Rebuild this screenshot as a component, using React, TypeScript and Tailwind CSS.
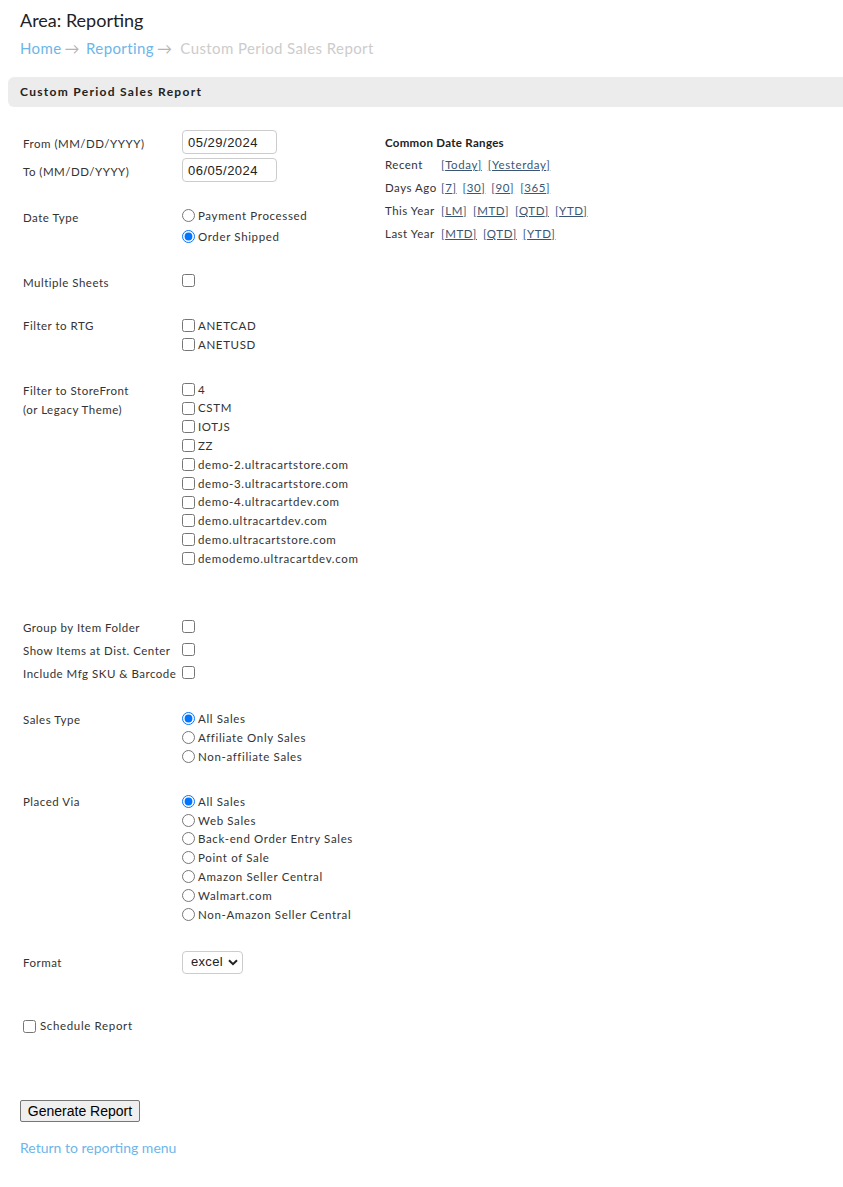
import { useState } from "react";

const STOREFRONTS = [
  "4",
  "CSTM",
  "IOTJS",
  "ZZ",
  "demo-2.ultracartstore.com",
  "demo-3.ultracartstore.com",
  "demo-4.ultracartdev.com",
  "demo.ultracartdev.com",
  "demo.ultracartstore.com",
  "demodemo.ultracartdev.com",
];

const PLACED_VIA = [
  "All Sales",
  "Web Sales",
  "Back-end Order Entry Sales",
  "Point of Sale",
  "Amazon Seller Central",
  "Walmart.com",
  "Non-Amazon Seller Central",
];

const DATE_RANGES: { label: string; links: string[] }[] = [
  { label: "Recent", links: ["Today", "Yesterday"] },
  { label: "Days Ago", links: ["7", "30", "90", "365"] },
  { label: "This Year", links: ["LM", "MTD", "QTD", "YTD"] },
  { label: "Last Year", links: ["MTD", "QTD", "YTD"] },
];

const Check = ({ label }: { label?: string }) => (
  <label className="flex h-[18.8px] items-center">
    <input type="checkbox" className="m-0 mr-[3px] h-[13px] w-[13px]" />
    {label && <span className="tracking-[0.65px]">{label}</span>}
  </label>
);

const Radio = ({
  name,
  label,
  checked,
  onChange,
  tall = false,
}: {
  name: string;
  label: string;
  checked: boolean;
  onChange: () => void;
  tall?: boolean;
}) => (
  <label className={`flex items-center ${tall ? "h-[21px]" : "h-[18.8px]"}`}>
    <input
      type="radio"
      name={name}
      checked={checked}
      onChange={onChange}
      className="m-0 mr-[3px] h-[13px] w-[13px]"
    />
    <span className="tracking-[0.65px]">{label}</span>
  </label>
);

const Row = ({ label, children, className = "" }: { label: React.ReactNode; children: React.ReactNode; className?: string }) => (
  <div className={`flex ${className}`}>
    <div className="w-[159px] shrink-0">{label}</div>
    <div>{children}</div>
  </div>
);

export default function App() {
  const [dateType, setDateType] = useState("Order Shipped");
  const [salesType, setSalesType] = useState("All Sales");
  const [placedVia, setPlacedVia] = useState("All Sales");

  return (
    <div className="min-h-[1187px] bg-white pt-[9px] font-['Lato',sans-serif] text-[#333]">
      <h1 className="pl-5 text-[18px] leading-[22px] text-[#222]">Area: Reporting</h1>
      <nav className="mt-[8px] pl-5 text-[15px] leading-[18px] tracking-[0.4px]">
        <a className="text-[#6cb6ea]">Home</a>
        <span className="ml-[3px] mr-[6px] text-[#b5b5b5]">→</span>
        <a className="text-[#6cb6ea]">Reporting</a>
        <span className="ml-[3px] mr-[8px] text-[#b5b5b5]">→</span>
        <span className="text-[#cccccc]">Custom Period Sales Report</span>
      </nav>

      <div className="ml-2 mt-[20px] flex h-[30px] items-center rounded-l-md bg-[#ececec] pl-3">
        <h2 className="text-[12px] font-bold tracking-[1.3px] text-[#222]">Custom Period Sales Report</h2>
      </div>

      <div className="flex pl-[23px] pt-[23px] text-[11.5px] tracking-[0.5px]">
        <div className="w-[362px] shrink-0">
          <Row label={<div className="pt-[5px]">From (MM/DD/YYYY)</div>}>
            <input
              defaultValue="05/29/2024"
              className="h-[24px] w-[95px] rounded border border-[#cccccc] px-[5px] font-['Liberation_Sans',sans-serif] text-[13px] tracking-[0.5px] text-[#222]"
            />
          </Row>
          <Row className="mt-[4px]" label={<div className="pt-[5px]">To (MM/DD/YYYY)</div>}>
            <input
              defaultValue="06/05/2024"
              className="h-[24px] w-[95px] rounded border border-[#cccccc] px-[5px] font-['Liberation_Sans',sans-serif] text-[13px] tracking-[0.5px] text-[#222]"
            />
          </Row>

          <Row className="mt-[23px]" label={<div className="pt-[4px]">Date Type</div>}>
            {["Payment Processed", "Order Shipped"].map((o) => (
              <Radio key={o} name="dt" tall label={o} checked={dateType === o} onChange={() => setDateType(o)} />
            ))}
          </Row>

          <Row className="mt-[24px]" label={<div className="pt-[3px]">Multiple Sheets</div>}>
            <Check />
          </Row>

          <Row className="mt-[25px]" label={<div className="pt-[1px]">Filter to RTG</div>}>
            <Check label="ANETCAD" />
            <Check label="ANETUSD" />
          </Row>

          <Row
            className="mt-[26px]"
            label={
              <div className="pt-[1px] leading-[19px]">
                Filter to StoreFront
                <br />
                (or Legacy Theme)
              </div>
            }
          >
            {STOREFRONTS.map((s) => (
              <Check key={s} label={s} />
            ))}
          </Row>

          <div className="mt-[49px] flex flex-col gap-[4px]">
            {["Group by Item Folder", "Show Items at Dist. Center", "Include Mfg SKU & Barcode"].map((l) => (
              <Row key={l} label={<div className="pt-[2px] whitespace-nowrap">{l}</div>}>
                <Check />
              </Row>
            ))}
          </div>

          <Row className="mt-[27px]" label={<div className="pt-[1px]">Sales Type</div>}>
            {["All Sales", "Affiliate Only Sales", "Non-affiliate Sales"].map((o) => (
              <Radio key={o} name="st" label={o} checked={salesType === o} onChange={() => setSalesType(o)} />
            ))}
          </Row>

          <Row className="mt-[26px]" label={<div className="pt-[1px]">Placed Via</div>}>
            {PLACED_VIA.map((o) => (
              <Radio key={o} name="pv" label={o} checked={placedVia === o} onChange={() => setPlacedVia(o)} />
            ))}
          </Row>

          <Row className="mt-[27px]" label={<div className="pt-[3px]">Format</div>}>
            <div className="relative w-[61px]">
              <select
                defaultValue="excel"
                className="h-[23px] w-[61px] appearance-none rounded border border-[#cccccc] bg-white pl-[8px] font-['Liberation_Sans',sans-serif] text-[13px] tracking-[0.3px] text-[#222]"
              >
                <option value="excel">excel</option>
                <option value="csv">csv</option>
              </select>
              <svg
                className="pointer-events-none absolute right-[5px] top-[8px]"
                width="10"
                height="7"
                viewBox="0 0 10 7"
              >
                <path d="M1 1.2 L5 5.2 L9 1.2" fill="none" stroke="#222" strokeWidth="2" />
              </svg>
            </div>
          </Row>

          <label className="mt-[43px] flex h-[19px] items-center">
            <input type="checkbox" className="m-0 mr-[4px] h-[13px] w-[13px]" />
            <span className="tracking-[0.65px]">Schedule Report</span>
          </label>
        </div>

        <div className="pt-[6px]">
          <div className="text-[11.5px] font-bold leading-[14px] tracking-[0.3px] text-[#222]">Common Date Ranges</div>
          <div className="mt-[5px] flex flex-col gap-[4px]">
            {DATE_RANGES.map((r) => (
              <div key={r.label} className="flex h-[19px] items-center">
                <span className="w-[56px] shrink-0 whitespace-nowrap">{r.label}</span>
                <div className="flex gap-[6px]">
                  {r.links.map((l) => (
                    <a key={l} href="#" className="tracking-[0.6px] text-[#3b5673] underline">
                      [{l}]
                    </a>
                  ))}
                </div>
              </div>
            ))}
          </div>
        </div>
      </div>

      <div className="mt-[62px] pl-5">
        <button className="h-[22px] w-[120px] rounded-[2px] border border-[#767676] bg-[#efefef] font-['Liberation_Sans',sans-serif] text-[14px] leading-[18px] text-black">
          Generate Report
        </button>
      </div>
      <div className="mt-[13px] pl-5">
        <a href="#" className="text-[14px] leading-[18px] text-[#6cb6ea]">
          Return to reporting menu
        </a>
      </div>
    </div>
  );
}
